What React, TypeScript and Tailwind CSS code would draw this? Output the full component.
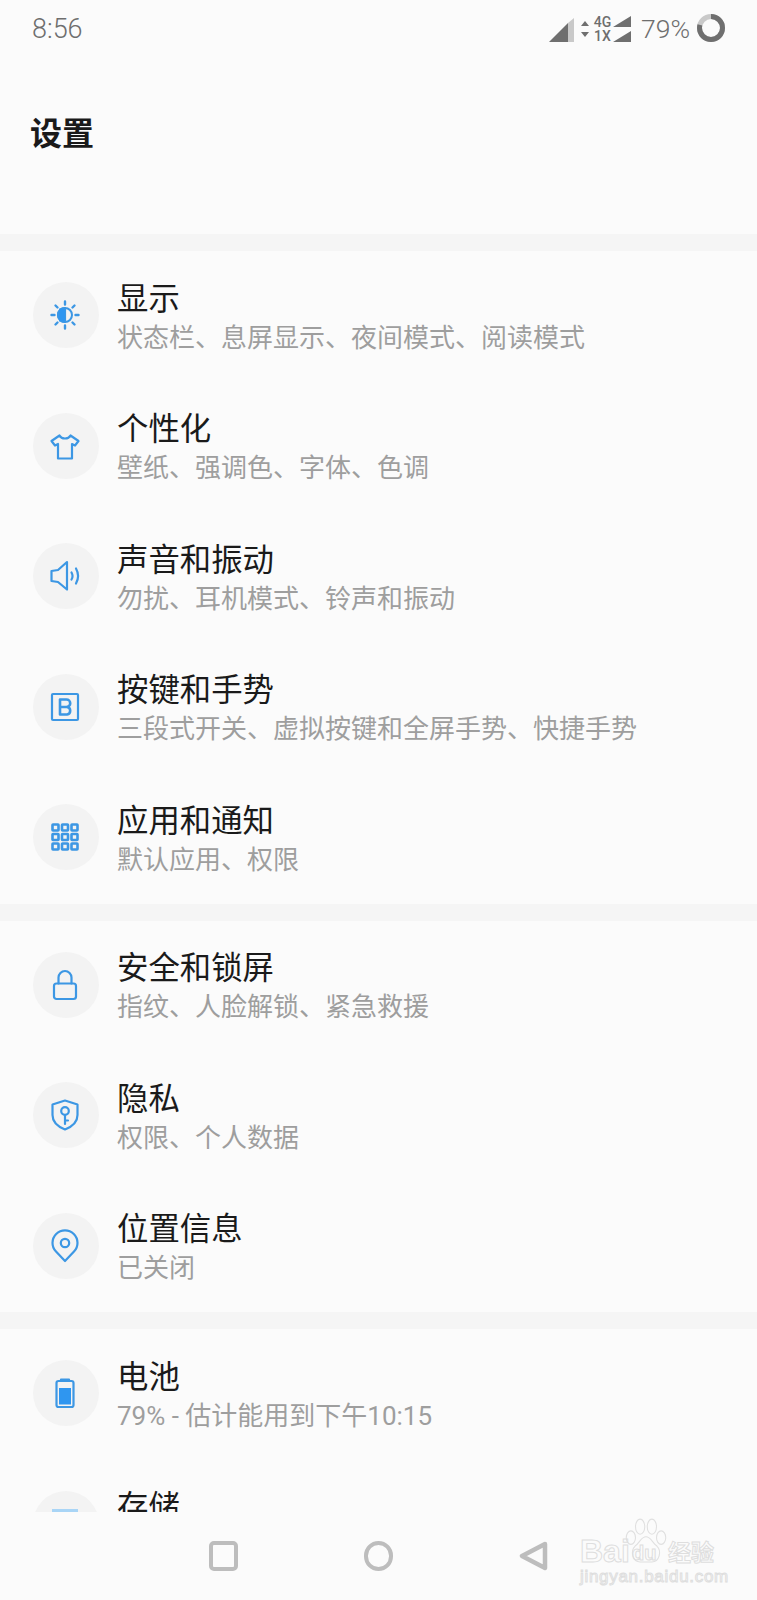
import React from "react";

const cjk = "font-['Roboto','Noto_Sans_CJK_SC',sans-serif]";

const BlueIcon = ({ children }: { children: React.ReactNode }) => (
  <svg
    width="36"
    height="36"
    viewBox="0 0 36 36"
    fill="none"
    stroke="#3c97e4"
    strokeWidth="2.200"
    strokeLinecap="round"
    strokeLinejoin="round"
  >
    {children}
  </svg>
);

const icons: Record<string, React.ReactNode> = {
  display: (
    <BlueIcon>
      <circle cx="18" cy="18" r="7" strokeWidth="2" />
      <path d="M18 11a7 7 0 0 0 0 14z" fill="#2f96f0" />
      <path d="M12 11.500h6v13h-6z" fill="#2f96f0" stroke="none" />
      <path d="M18 4.500v3M18 28.500v3M4.500 18h3M28.500 18h3M8.500 8.500l2 2M25.500 25.500l2 2M8.500 27.500l2-2M25.500 10.500l2-2" strokeWidth="2.400" />
    </BlueIcon>
  ),
  shirt: (
    <BlueIcon>
      <path d="M12.500 7.500 4.500 13l3.500 4.500 3-1.500v14.500h14V16l3 1.500 3.500-4.500-8-5.500c-1 2-3 3-5.500 3s-4.500-1-5.500-3z" />
    </BlueIcon>
  ),
  sound: (
    <BlueIcon>
      <path d="M4.500 13v10l6.500 1 9 7.500V4l-9 8z" />
      <path d="M24.500 14.500c1.300 2.300 1.300 5 0 7M29 10.500c2.500 4.500 2.500 10.500 0 15" />
    </BlueIcon>
  ),
  button: (
    <BlueIcon>
      <rect x="5" y="5" width="26" height="26" rx="1" />
      <path d="M13 10.500h6.500a3.700 3.700 0 0 1 0 7.500H13zM13 18h7a3.800 3.800 0 0 1 0 7.500h-7z" strokeWidth="2.600" />
    </BlueIcon>
  ),
  apps: (
    <BlueIcon>
      {[5.500, 15, 24.500].map((y) =>
        [5.500, 15, 24.500].map((x) => (
          <rect key={`${x}-${y}`} x={x} y={y} width="6" height="6" strokeWidth="2.600" rx="0.500" />
        ))
      )}
    </BlueIcon>
  ),
  lock: (
    <BlueIcon>
      <rect x="7" y="16.500" width="22" height="15.500" rx="2.500" />
      <path d="M11.500 16.500V10.500a6.500 6.500 0 0 1 13 0v6" />
    </BlueIcon>
  ),
  shield: (
    <BlueIcon>
      <path d="M18 3.500 5.500 7.500v10.500c0 7 5 11.500 12.500 14.500 7.500-3 12.500-7.500 12.500-14.500V7.500z" />
      <circle cx="18" cy="14" r="3.800" />
      <path d="M18 18v9M18 23.500h3" />
    </BlueIcon>
  ),
  pin: (
    <BlueIcon>
      <path d="M18 33 9 23.500a12.500 12.500 0 1 1 18 0z" />
      <circle cx="18" cy="15" r="4.200" />
    </BlueIcon>
  ),
  battery: (
    <BlueIcon>
      <path d="M14 6V4.500h8V6" />
      <rect x="9.500" y="6" width="17" height="26" rx="2" />
      <rect x="12" y="13" width="12" height="16.500" fill="#2f96f0" stroke="none" />
    </BlueIcon>
  ),
  storage: (
    <BlueIcon>
      <path d="M5 4.500h26" stroke="#a9d5f6" strokeWidth="3" strokeLinecap="butt" />
    </BlueIcon>
  ),
};

const sections = [
  [
    { icon: "display", title: "显示", sub: "状态栏、息屏显示、夜间模式、阅读模式" },
    { icon: "shirt", title: "个性化", sub: "壁纸、强调色、字体、色调" },
    { icon: "sound", title: "声音和振动", sub: "勿扰、耳机模式、铃声和振动" },
    { icon: "button", title: "按键和手势", sub: "三段式开关、虚拟按键和全屏手势、快捷手势" },
    { icon: "apps", title: "应用和通知", sub: "默认应用、权限" },
  ],
  [
    { icon: "lock", title: "安全和锁屏", sub: "指纹、人脸解锁、紧急救援" },
    { icon: "shield", title: "隐私", sub: "权限、个人数据" },
    { icon: "pin", title: "位置信息", sub: "已关闭" },
  ],
  [
    { icon: "battery", title: "电池", sub: "79% - 估计能用到下午10:15" },
    { icon: "storage", title: "存储", sub: "" },
  ],
];

const Row = ({ icon, title, sub }: { icon: string; title: string; sub: string }) => (
  <div className="flex h-[130.5px] shrink-0 items-center gap-[18px] pb-[2px] pl-[33px]">
    <div className="flex h-[66px] w-[66px] shrink-0 items-center justify-center rounded-full bg-[#f3f3f3] pr-[2px]">
      {icons[icon]}
    </div>
    <div className="pt-[7px]">
      <div className="text-[31.400px] leading-[38px] text-[#1a1a1a]">{title}</div>
      <div className="min-h-[38px] text-[26px] leading-[38px] text-[#9e9e9e]">{sub}</div>
    </div>
  </div>
);

const StatusBar = () => (
  <div className="flex h-[56px] items-center justify-between pl-[32px] pr-[32px] pt-[2px] text-[#6e6e6e]">
    <span className="text-[27px] font-light">8:56</span>
    <div className="flex items-center">
      <svg width="25" height="24" viewBox="0 0 25 24" className="mt-[1px]">
        <path d="M0 24 19 5v19z" fill="#6f6f6f" />
        <path d="M19 5l6-5v24h-6z" fill="#c9c9c9" />
      </svg>
      <svg width="12" height="20" viewBox="0 0 12 20" className="ml-[5px]">
        <path d="M6 2l4 5H2zM6 18l4-5H2z" fill="#6f6f6f" />
      </svg>
      <div className="ml-[1px] flex w-[21px] flex-col items-center text-[14px] font-medium leading-[14px]">
        <span>4G</span>
        <span>1X</span>
      </div>
      <svg width="18" height="26" viewBox="0 0 18 26">
        <path d="M0 11 18 0v11zM0 26l18-11v11z" fill="#6f6f6f" />
      </svg>
      <span className="ml-[10px] text-[26.500px] font-light">79%</span>
      <svg width="28" height="28" viewBox="0 0 28 28" className="ml-[7px] -mt-[2px]">
        <circle cx="14" cy="14" r="11.500" fill="none" stroke="#c9c9c9" strokeWidth="5" />
        <circle
          cx="14"
          cy="14"
          r="11.500"
          fill="none"
          stroke="#6f6f6f"
          strokeWidth="5"
          strokeDasharray="57 72.300"
          transform="rotate(-90 14 14)"
        />
      </svg>
    </div>
  </div>
);

const Watermark = () => (
  <div className="absolute left-[580px] top-[6px] h-[68px] w-[138px] text-transparent [-webkit-text-stroke:1px_#dedede]">
    <svg width="42" height="46" viewBox="0 0 50 54" className="absolute left-[45px] top-0" fill="#fbfbfb" stroke="#e0e0e0" strokeWidth="1.300">
      <ellipse cx="18" cy="10" rx="5.500" ry="9" />
      <ellipse cx="32" cy="10" rx="5.500" ry="9" />
      <ellipse cx="7" cy="23" rx="5.500" ry="8" />
      <ellipse cx="43" cy="23" rx="5.500" ry="8" />
      <path d="M25 22c-6 0-7 7-13 11-6 6-3 19 6 19h14c9 0 12-13 6-19-6-4-7-11-13-11z" />
    </svg>
    <span className="absolute left-0 top-[18px] font-['Liberation_Sans',sans-serif] text-[32px] font-bold leading-[30px]">Bai</span>
    <span className="absolute left-[52px] top-[22px] font-['Liberation_Sans',sans-serif] text-[20px] font-bold leading-[26px]">du</span>
    <span className="absolute left-[88px] top-[18px] font-['Noto_Sans_CJK_SC',sans-serif] text-[23px] font-bold leading-[30px]">经验</span>
    <span className="absolute left-0 top-[50px] whitespace-nowrap font-['Liberation_Sans',sans-serif] text-[17px] leading-[18px] tracking-[0.700px]">
      jingyan.baidu.com
    </span>
  </div>
);

const App = () => {
  return (
    <div className={`flex h-[1600px] w-[757px] flex-col overflow-hidden bg-[#fbfbfb] ${cjk}`}>
      <div className="h-[234px] shrink-0">
        <StatusBar />
        <h1 className="mt-[57px] pl-[30px] text-[32px] font-bold leading-[42px] text-[#1a1a1a]">设置</h1>
      </div>
      <div className="min-h-0 flex-1 overflow-hidden">
        {sections.map((rows, i) => (
          <div key={i}>
            <div className="h-[17px] bg-[#f5f5f5]" />
            {rows.map((r) => (
              <Row key={r.title} {...r} />
            ))}
          </div>
        ))}
      </div>
      <div className="relative flex h-[88px] shrink-0 bg-[#fbfbfb]">
        <div className="flex items-start gap-[126px] pl-[209px] pt-[29px]">
          <div className="h-[30px] w-[29px] rounded-[5px] border-[4px] border-[#bdbdbd]" />
          <div className="h-[30px] w-[29px] rounded-full border-[4px] border-[#bdbdbd]" />
          <svg width="29" height="30" viewBox="0 0 29 30">
            <path d="M26 3 3 15 26 27z" fill="none" stroke="#bdbdbd" strokeWidth="4.500" strokeLinejoin="round" />
          </svg>
        </div>
        <Watermark />
      </div>
    </div>
  );
};

export default App;
